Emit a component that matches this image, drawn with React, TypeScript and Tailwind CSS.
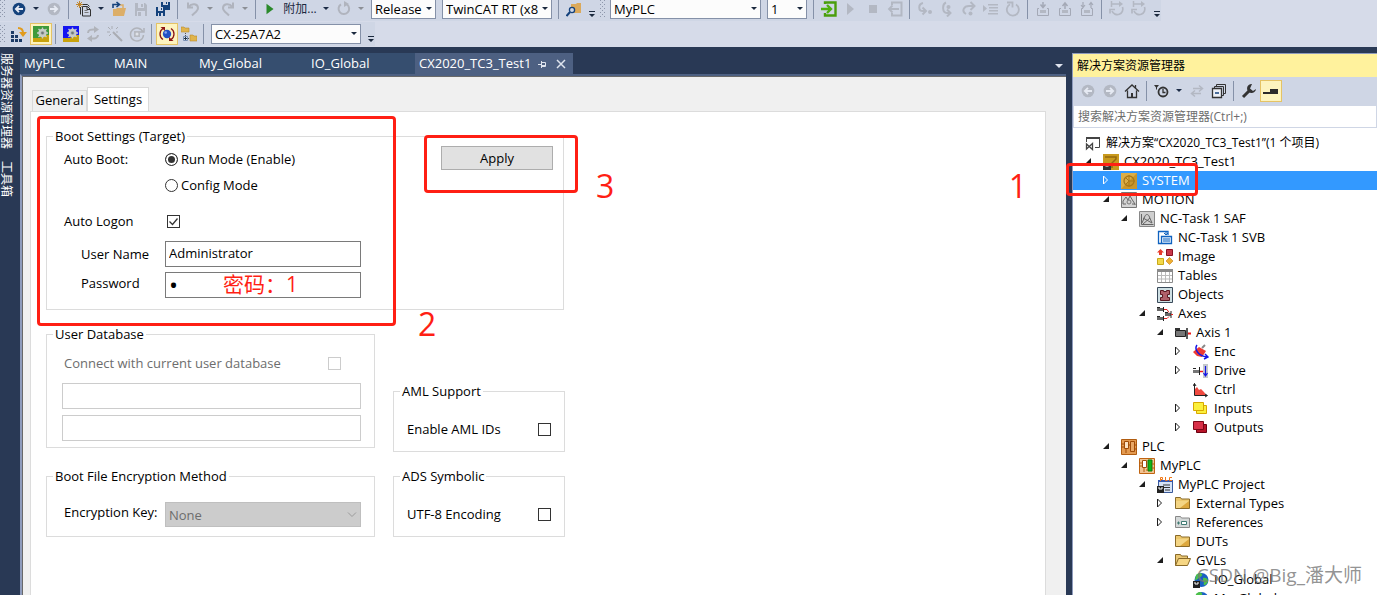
import React, { useState } from 'react';

type IconProps = { children: React.ReactNode; size?: string };

const Svg: React.FC<IconProps> = ({ children, size = 'w-4' }) => (
  <svg viewBox="0 0 16 16" className={`${size} h-4 shrink-0`} fill="none" aria-hidden="true">{children}</svg>
);

const NAVY = '#1b3a66';
const DIM = '#b3b8c3';

/* Toolbar helpers */

const Tool: React.FC<{ label: string; active?: boolean; disabled?: boolean; children: React.ReactNode }> = ({ label, active, disabled, children }) => (
  <button
    aria-label={label}
    disabled={disabled}
    className={active
      ? '-mx-[3px] flex h-[22px] w-[22px] shrink-0 items-center justify-center border border-[#e5c365] bg-[#fdf4bf]'
      : 'flex h-4 shrink-0 items-center justify-center'}
  >
    {children}
  </button>
);

const Sep = () => <span className="mr-px h-5 w-px shrink-0 bg-[#8591a8]" />;

const Caret: React.FC<{ dim?: boolean }> = ({ dim }) => (
  <svg viewBox="0 0 9 6" className="-mx-px h-1.5 w-[9px] shrink-0" aria-hidden="true">
    <path d="M1 1h6L4 4z" fill={dim ? '#8c8f96' : '#1b2a45'} />
  </svg>
);

const Overflow = () => (
  <svg viewBox="0 0 8 16" className="h-4 w-2 shrink-0" aria-hidden="true">
    <path d="M1 10h6v1H1zM1 13h6l-3 3z" fill="#1b293e" />
  </svg>
);

const Grip: React.FC<{ tight?: boolean }> = ({ tight }) => (
  <svg viewBox="0 0 6 18" className={tight ? '-mx-[2px] h-[18px] w-1.5 shrink-0' : '-mr-px h-[18px] w-1.5 shrink-0'} aria-hidden="true">
    {[0, 4, 8, 12, 16].map(y => (
      <g key={y} fill="#8e97ab">
        <path d={`M0 ${y}h1v1h-1zM4 ${y}h1v1h-1zM2 ${y + 2}h1v1h-1z`} />
      </g>
    ))}
  </svg>
);

const Combo: React.FC<{ label: string; value: string; width: string }> = ({ label, value, width }) => (
  <div className={`relative h-5 shrink-0 ${width}`}>
    <select aria-label={label} className="block h-5 w-full appearance-none overflow-hidden border border-[#8591a8] bg-[#fcfcfc] pr-3 pl-[3px] text-[13px] leading-4 text-clip whitespace-nowrap text-black outline-none">
      <option>{value}</option>
    </select>
    <svg viewBox="0 0 6 3" className="pointer-events-none absolute top-2 right-1 h-[3px] w-1.5" aria-hidden="true">
      <path d="M0 0h6L3 3z" fill="#1b293e" />
    </svg>
  </div>
);

/* Toolbar icons */

const CircleArrow: React.FC<{ dir: 'left' | 'right'; dim?: boolean }> = ({ dir, dim }) => (
  <Svg>
    <circle cx="8" cy="8" r="6.3" fill={dim ? DIM : '#14427c'} />
    <path
      d={dir === 'left' ? 'M12 8H5M8 4.8L4.8 8L8 11.2' : 'M4 8h7M8 4.8L11.2 8L8 11.2'}
      stroke="#e6eaf3"
      strokeWidth="1.8"
    />
  </Svg>
);

const NewProject = () => (
  <Svg>
    <path d="M5.5 3.5h6l2 2M4.500 6v7.500M6.500 5.500h5l3 3v6.500h-8zM11 5.500v3h3" stroke="#333" />
    <path d="M8.500 9.500h3M8.500 11.500h4" stroke="#777" />
    <path d="M1 1l5 5M6 1L1 6M3.500 0v7M0 3.500h7" stroke="#c07f1c" strokeWidth=".9" />
  </Svg>
);

const OpenFile = () => (
  <Svg>
    <path d="M2 8h3l1-1h9l-2 8H2z" fill="#dcae68" />
    <path d="M12 7V4H9" stroke="#dcae68" strokeWidth="1.500" />
    <path d="M2 7V3.500h6M5.500 1L8.500 3.500L5.500 6" stroke="#14427c" strokeWidth="1.600" />
  </Svg>
);

const Save = () => (
  <Svg>
    <path d="M2 2h10l2 2v11H2z" fill={DIM} />
    <path d="M5 2h6v5H5zM4 10h8v5H4z" fill="#d0d6e5" />
    <path d="M8 3h2v3H8zM5 11h3v4H5z" fill={DIM} />
  </Svg>
);

const SaveAll = () => (
  <Svg>
    <path d="M6 1h9v8H6zM1 6h9v9H1z" fill="#14427c" />
    <path d="M8 1h5v3H8zM3 6h5v4H3zM3 12h5v3H3z" fill="#cfd6e5" />
    <path d="M11 1h1v2h-1zM6 7h1v2H6zM4 12h2v3H4z" fill="#14427c" />
  </Svg>
);

const Undo: React.FC<{ flip?: boolean }> = ({ flip }) => (
  <Svg>
    <g transform={flip ? 'translate(16 0) scale(-1 1)' : undefined} stroke="#b0b4be" strokeWidth="2">
      <path d="M3 1.500v5h5M3.500 6C7 1.500 13 3 13 7c0 3-3 4.500-6 7.500" />
    </g>
  </Svg>
);

const Restart = () => (
  <Svg>
    <path d="M11 3.500A5.300 5.300 0 1 1 5 3.300" stroke="#b0b4be" strokeWidth="2" />
    <path d="M8 0v6l5-3z" fill="#b0b4be" />
  </Svg>
);

const FindFolder = () => (
  <Svg>
    <path d="M5 3h5l1-1h4v10H5z" fill="#dba95b" />
    <circle cx="6" cy="9" r="2.600" fill="#cfd6e5" stroke="#14427c" strokeWidth="1.300" />
    <path d="M4 11l-3.500 4" stroke="#14427c" strokeWidth="2" />
  </Svg>
);

const Door: React.FC<{ out?: boolean }> = ({ out }) => out ? (
  <Svg>
    <path d="M5 4V1.500h9.500v13H5V12" stroke={DIM} strokeWidth="2" />
    <path d="M12 8H2M5.500 4.500L2 8l3.500 3.500" stroke={DIM} strokeWidth="1.800" />
  </Svg>
) : (
  <Svg>
    <path d="M4 3V1.500h10.500v13H4V12" stroke="#4a9e0c" strokeWidth="2.400" />
    <path d="M0 8h9M6 4l4 4l-4 4" stroke="#4fb010" strokeWidth="2.400" />
  </Svg>
);

const StepOver = () => (
  <Svg>
    <path d="M6 2C1 3 1 10 6 10h2M5.500 6.500L9 10l-3.500 3.500" stroke={DIM} strokeWidth="2" />
    <circle cx="13" cy="11" r="2" fill={DIM} />
  </Svg>
);

const StepInto = () => (
  <Svg>
    <path d="M7 1.500C3 3 3 12 8 12h2M8 8.500l3.500 3.500L8 15.500" stroke={DIM} strokeWidth="2" />
    <circle cx="9.500" cy="6" r="2" fill={DIM} />
  </Svg>
);

const StepOut = () => (
  <Svg>
    <path d="M5 13C0 10 3 5 8 5h5M9.500 1L13.500 5L9.500 9" stroke={DIM} strokeWidth="2" />
    <circle cx="9.500" cy="12.500" r="2" fill={DIM} />
  </Svg>
);

const ShowLine = () => (
  <Svg>
    <path d="M0 4l4 3.500L0 11zM5 3h10v1.500H5zM6 6h9v1.500H6zM6 9h9v1.500H6zM5 12h10v1.500H5z" fill={DIM} />
  </Svg>
);

const Cycle = () => (
  <Svg>
    <path d="M11 3.500A6 6 0 1 1 5 3.300" stroke={DIM} strokeWidth="1.800" />
    <path d="M2 1.500h5.500v5" stroke={DIM} strokeWidth="1.800" />
  </Svg>
);

const Tray: React.FC<{ kind: 'down' | 'up' | 'both' }> = ({ kind }) => (
  <Svg>
    <path d="M4 7.500H2.500v7h11v-7H12" stroke="#a4a9b6" />
    <path d="M5 9h6v3H5z" fill={DIM} />
    {kind === 'down' && <path d="M8 1v5M5.500 3.500L8 6.500l2.500-3" stroke="#a4a9b6" strokeWidth="1.500" />}
    {kind === 'up' && <path d="M8 8V2.500M5.500 5L8 2l2.500 3" stroke="#a4a9b6" strokeWidth="1.500" />}
    {kind === 'both' && <path d="M4 1v5M2 4l2 2.500L6 4M12 7V2M10 4l2-2.500L14 4" stroke="#a4a9b6" strokeWidth="1.200" />}
  </Svg>
);

const Loop = () => (
  <Svg>
    <path d="M2 3h9M2.500 0v6" stroke={DIM} strokeWidth="1.500" />
    <path d="M10 0v6l4-3z" fill={DIM} />
    <path d="M13.500 6a5.500 5.500 0 1 1-10.500 4M1 12.500v-4h5" stroke={DIM} strokeWidth="1.700" />
  </Svg>
);

const Activate = () => (
  <Svg>
    <path d="M0 5h3v3H0zM0 9h3v3H0zM0 13h3v3H0zM4 9h3v3H4zM4 13h3v3H4zM8 13h3v3H8z" fill={NAVY} />
    <path d="M7 2c4 0 5 2 5 5" stroke="#e19b1d" strokeWidth="2" />
    <path d="M8 6h8l-4 5z" fill="#e19b1d" />
  </Svg>
);

const GearTile: React.FC<{ color: string }> = ({ color }) => (
  <Svg>
    <path d="M0 0h16v16H0z" fill={color} />
    <path d="M0 12h7l3-3h6v7H0z" fill="#c9a30c" />
    <circle cx="9.500" cy="7" r="3.200" stroke="#c8ccc8" strokeWidth="2" />
    <path d="M9.500 1.500v11M4 7h11M5.500 3l8 8M13.500 3l-8 8" stroke="#c8ccc8" strokeWidth="1.300" />
    <circle cx="9.500" cy="7" r="1.400" fill="#707878" />
  </Svg>
);

const Swap = () => (
  <Svg>
    <path d="M3 7c0-3 3-4 8-3.500M13 9c0 3-3 4-8 3.500" stroke="#b0b3ba" strokeWidth="2" />
    <path d="M9 0l5 3.500L9 7zM7 9l-5 3.500L7 16z" fill="#b0b3ba" />
  </Svg>
);

const Wand = () => (
  <Svg>
    <path d="M6 6l9 9" stroke="#a9acb3" strokeWidth="2" />
    <path d="M5 0v3M1 1l2.500 2.500M0 6h3M2 10l2-2M9 3l2-2M9 6h2" stroke="#a9acb3" />
  </Svg>
);

const Target = () => (
  <Svg>
    <path d="M14 6A6.500 6.500 0 1 0 14.500 9M15 2v4h-4" stroke="#b0b3ba" strokeWidth="1.500" />
    <path d="M5 5h6v6H5z" fill="#b7bac1" />
    <circle cx="8" cy="8" r="1.500" fill="#dfe2e8" />
  </Svg>
);

const RunMode = () => (
  <Svg>
    <circle cx="8" cy="8" r="4.200" fill="#2450c4" />
    <circle cx="6.700" cy="6.500" r="1.300" fill="#89a6f0" />
    <path d="M4 2.500C0 5 0 11 4 13.500M12 2.500c4 2.500 4 8.500 0 11" stroke="#8c1414" strokeWidth="1.300" />
    <path d="M1.500 1H6v4zM14.500 15H10v-4z" fill="#8c1414" />
  </Svg>
);

const FolderLink = () => (
  <Svg>
    <path d="M0 1h3l1 1h4v4H0zM9 9h3l1 1h3v5H9z" fill="#e0b44c" stroke="#b88a2c" strokeWidth=".6" />
    <path d="M4.500 7v3M7 12.500h2" stroke="#555" strokeDasharray="1 1" />
    <path d="M2.500 10.500h4v4h-4z" fill="#dfe8f4" stroke="#7a90b5" />
    <path d="M3 12.500h3M4.500 11v3" stroke="#234" />
  </Svg>
);

/* Solution tree icons */

const TREE_ICONS: Record<string, React.ReactNode> = {
  solution: (
    <>
      <path d="M1.500 7V2.500h13v10H10" stroke="#444" />
      <path d="M1 2h14v2H1z" fill="#444" />
      <path d="M1.500 9v5l6-5.500v6z" stroke="#444" strokeWidth="1.300" />
    </>
  ),
  project: (
    <>
      <path d="M0 0h16v16H0z" fill="#c99a1e" />
      <path d="M2 3h11v2L9 9v5" stroke="#94690f" strokeWidth="1.500" />
      <path d="M0 9h8v7H0z" fill="#333" />
      <path d="M2.500 10v2h3v-2" stroke="#fff" />
    </>
  ),
  system: (
    <>
      <path d="M0 0h16v16H0z" fill="#c9962a" />
      <path d="M0 0h16L0 16z" fill="#dcae48" />
      <circle cx="8" cy="8" r="5" stroke="#a87818" strokeWidth="1.300" />
      <path d="M8 2v12M8 8L4 4M8 8h6M4 12l4-4" stroke="#a87818" />
    </>
  ),
  motion: (
    <>
      <path d="M.5 .5h15v15H.5z" fill="#d4d4d4" stroke="#777" />
      <path d="M2 12V9l3-4l2 3l2-4l3 5l2 3v1M2 12h3M11 12h3" stroke="#666" />
      <circle cx="8" cy="10" r="2" stroke="#777" />
    </>
  ),
  task: (
    <>
      <path d="M.5 .5h15v15H.5z" fill="#cfcfcf" stroke="#888" />
      <path d="M2.500 3v10.500h12M3 12l3-7c1-2 3-2 4 0l3 7M4 7l9 5M11 7l-7 6" stroke="#666" />
    </>
  ),
  svb: (
    <>
      <path d="M11 5V1.500H1.500v12H4" stroke="#0f62c0" strokeWidth="1.300" />
      <path d="M4.500 6.500h10v7h-10z" fill="#e5f1fd" stroke="#0f62c0" strokeWidth="1.300" />
      <path d="M6 9h7M6 11h7M9 1v3M7 3l2 2l2-2" stroke="#0f62c0" />
    </>
  ),
  image: (
    <>
      <path d="M3.500 0L7 3.500H5V6H2V3.500H0z" fill="#e83a2a" />
      <path d="M9.500 .5h6v6h-6z" fill="#c8384a" stroke="#8a1022" />
      <path d="M.5 9.500h6v6h-6z" fill="#f2d84a" stroke="#c8a818" />
      <path d="M12.500 8.500L16 12l-3.500 3.500L9 12z" fill="#f0b030" stroke="#c07810" strokeWidth=".6" />
    </>
  ),
  tables: (
    <>
      <path d="M.5 1.500h15v13H.5z" fill="#fff" stroke="#8a8a8a" />
      <path d="M0 1h16v3H0z" fill="#8a8a8a" />
      <path d="M4.500 4v10M8.500 4v10M12.500 4v10M1 7.500h14M1 11h14" stroke="#bbb" />
    </>
  ),
  objects: (
    <>
      <path d="M.5 .5h15v15H.5z" fill="#cfe0e4" stroke="#3a4a5a" />
      <path d="M3.500 3.500h3v1h3v-1h3v4h-2v3h2v3h-9v-3h2v-3h-2z" fill="#b0606a" stroke="#5a1820" />
    </>
  ),
  axes: (
    <>
      <path d="M0 2h6v3H0zM0 11h6v3H0zM8 7h6v3H8z" fill="#666" />
      <path d="M0 1.500h3M6.500 1v5M6.500 10v5M14 5v7M8 6.500h3M0 10.500h3" stroke="#222" />
      <path d="M7 3.500h3l2 3M7 12.500h3l2-2M14 8.500h2" stroke="#e02020" />
    </>
  ),
  axis: (
    <>
      <path d="M.5 5.500h10v6H.5z" fill="#777" stroke="#222" />
      <path d="M0 3h5v2H0z" fill="#333" />
      <path d="M12 3v11" stroke="#222" strokeWidth="1.500" />
      <path d="M13 8.500h3" stroke="#f01818" strokeWidth="2" />
    </>
  ),
  enc: (
    <>
      <path d="M6 3l7 4l-4 6l-5-1l-4-4z" fill="#ee3b33" />
      <path d="M9 4l3-3" stroke="#888" strokeWidth="2" />
      <path d="M4 1C1 5 5 12 14 13M12 10l3 3l-4 2" stroke="#1414e6" strokeWidth="1.500" />
    </>
  ),
  drive: (
    <>
      <path d="M0 7h6v3H0z" fill="#777" />
      <path d="M0 5.500h3M6.500 4v8" stroke="#222" />
      <path d="M7 8.500h3" stroke="#f01818" strokeWidth="1.500" />
      <path d="M10 1h5v14h-5z" fill="#c4c8cc" />
      <path d="M12.500 3v9M10.500 10l2 3l2-3" stroke="#1414e6" strokeWidth="1.200" />
    </>
  ),
  ctrl: (
    <>
      <path d="M2 13V7l2-2l2 3l2-1l3 3l2 3z" fill="#f04a40" />
      <path d="M1.500 1.500v12H14M0 4l1.500-2.500L3 4M12 12l2.500 1.500L12 15" stroke="#222" />
    </>
  ),
  inputs: (
    <>
      <path d="M3.500 4.500h10v8h-10z" fill="#fbf03c" stroke="#d8a800" />
      <path d="M.5 1.500h10v8H.5z" fill="#fbf03c" stroke="#d8a800" />
    </>
  ),
  outputs: (
    <>
      <path d="M3.500 4.500h10v8h-10z" fill="#b81428" stroke="#6a0010" />
      <path d="M.5 1.500h10v8H.5z" fill="#d83048" stroke="#7a0818" />
    </>
  ),
  plc: (
    <>
      <path d="M.5 .5h15v15H.5z" fill="#e39a50" stroke="#b05c10" />
      <path d="M3.500 2.500h4v7h-4z" fill="#fbe3c4" stroke="#a04c08" />
      <path d="M9.500 2.500h4v10h-4z" fill="#e8a868" stroke="#a04c08" />
      <path d="M0 5h3M0 8h3M5 10v4M13 6h3M13 10h3M7 6h3" stroke="#a04c08" />
    </>
  ),
  myplc: (
    <>
      <path d="M.5 .5h15v15H.5z" fill="#f3c392" stroke="#c06410" />
      <path d="M3.500 2.500h4v7h-4z" fill="#fff" stroke="#a04c08" />
      <path d="M9 2h4v11H9z" fill="#0fb414" stroke="#0a7a0c" />
      <path d="M0 5h3M0 8h3M5 10v4M13 6h3M13 10h3M7 12h2" stroke="#b05c10" />
    </>
  ),
  plcproject: (
    <>
      <path d="M1.500 3.500h14v12h-14z" fill="#d6e2f5" stroke="#3a5a9a" />
      <path d="M1 3h15v2H1z" fill="#3558b0" />
      <path d="M3.500 4V.5h2v2h-2M8.500 0v3.500h2M15 .5h-2.500v3H15" stroke="#f07818" />
      <path d="M6 8h7M6 10.500h7M8 13h5" stroke="#333" />
      <path d="M0 9h7v7H0z" fill="#222" />
      <path d="M2 10v2h3v-2" stroke="#fff" />
    </>
  ),
  folder: (
    <>
      <path d="M.5 12.500v-11h5l1 1.500h8v9.500z" fill="#ecc86e" stroke="#8a6a28" />
      <path d="M1 5h13v7H1z" fill="#f4d584" />
      <path d="M14 5v7H5z" fill="#dda83e" />
    </>
  ),
  references: (
    <>
      <path d="M.5 12.500v-11h5l1 1.500h8v9.500z" fill="#d4d8d8" stroke="#888" />
      <path d="M6.500 6.500h5v3h-5z" fill="#fff" stroke="#3f7a72" />
      <path d="M2 8h3M3.500 6.500v3" stroke="#3f7a72" />
    </>
  ),
  folderopen: (
    <>
      <path d="M.5 12.500v-11h5l1 1.500h6V6" fill="#e9c774" stroke="#8a6a28" />
      <path d="M.5 12.500l3-7h12l-3 7z" fill="#f6d683" stroke="#8a6a28" />
    </>
  ),
  globe: (
    <>
      <circle cx="8.500" cy="8" r="7" fill="#1a5fc4" />
      <path d="M3 3c3-3 5-2 6-1s-1 3-3 4s-3 3-4 2zM10 6c3-1 5 1 5 3s-3 5-4 4s1-3-1-4z" fill="#4cc04a" />
      <path d="M0 9h7v7H0z" fill="#222" />
      <path d="M2 10v2h3v-2" stroke="#fff" />
    </>
  ),
};

type Node = { level: number; icon: string; text: string; state?: 'open' | 'closed' };

const NODES: Node[] = [
  { level: 0, icon: 'solution', text: '解决方案“CX2020_TC3_Test1”(1 个项目)' },
  { level: 1, icon: 'project', text: 'CX2020_TC3_Test1', state: 'open' },
  { level: 2, icon: 'system', text: 'SYSTEM', state: 'closed' },
  { level: 2, icon: 'motion', text: 'MOTION', state: 'open' },
  { level: 3, icon: 'task', text: 'NC-Task 1 SAF', state: 'open' },
  { level: 4, icon: 'svb', text: 'NC-Task 1 SVB' },
  { level: 4, icon: 'image', text: 'Image' },
  { level: 4, icon: 'tables', text: 'Tables' },
  { level: 4, icon: 'objects', text: 'Objects' },
  { level: 4, icon: 'axes', text: 'Axes', state: 'open' },
  { level: 5, icon: 'axis', text: 'Axis 1', state: 'open' },
  { level: 6, icon: 'enc', text: 'Enc', state: 'closed' },
  { level: 6, icon: 'drive', text: 'Drive', state: 'closed' },
  { level: 6, icon: 'ctrl', text: 'Ctrl' },
  { level: 6, icon: 'inputs', text: 'Inputs', state: 'closed' },
  { level: 6, icon: 'outputs', text: 'Outputs', state: 'closed' },
  { level: 2, icon: 'plc', text: 'PLC', state: 'open' },
  { level: 3, icon: 'myplc', text: 'MyPLC', state: 'open' },
  { level: 4, icon: 'plcproject', text: 'MyPLC Project', state: 'open' },
  { level: 5, icon: 'folder', text: 'External Types', state: 'closed' },
  { level: 5, icon: 'references', text: 'References', state: 'closed' },
  { level: 5, icon: 'folder', text: 'DUTs' },
  { level: 5, icon: 'folderopen', text: 'GVLs', state: 'open' },
  { level: 6, icon: 'globe', text: 'IO_Global' },
  { level: 6, icon: 'globe', text: 'My_Global' },
];

const TreeRow: React.FC<{ node: Node; selected: boolean; onSelect: () => void }> = ({ node, selected, onSelect }) => (
  <li
    role="treeitem"
    aria-selected={selected}
    onClick={onSelect}
    className={`flex h-[19px] items-center whitespace-nowrap ${selected ? 'bg-[#3399ff] text-white' : 'text-black'}`}
    style={{ paddingLeft: 12 + Math.max(node.level - 1, 0) * 18 }}
  >
    {node.level > 0 && (
      <svg viewBox="2 0 18 16" className="h-4 w-[18px] shrink-0" aria-hidden="true">
        {node.state === 'open' && <path d="M8 4v6H2z" fill="#1e1e1e" />}
        {node.state === 'closed' && <path d="M2.500 3v8l4-4z" fill="none" stroke={selected ? '#fff' : '#1e1e1e'} />}
      </svg>
    )}
    <Svg>{TREE_ICONS[node.icon]}</Svg>
    <span className={`ml-[5px] leading-[19px] ${node.level === 0 ? 'text-[12px]' : 'text-[13px]'}`}>{node.text}</span>
  </li>
);

/* Settings form */

const Group: React.FC<{ title: string; className: string; width?: string; children: React.ReactNode }> = ({ title, className, width = '', children }) => (
  <fieldset className={`border border-[#dcdcdc] ${width}`}>
    <legend className="ml-1.5 px-0.5 leading-[18px]">{title}</legend>
    <div className={className}>{children}</div>
  </fieldset>
);

const Check: React.FC<{ id: string; checked?: boolean; disabled?: boolean }> = ({ id, checked, disabled }) => (
  <span className="relative block h-[13px] w-[13px]">
    <input
      id={id}
      type="checkbox"
      defaultChecked={checked}
      disabled={disabled}
      className="peer block h-[13px] w-[13px] appearance-none border border-[#333] bg-white disabled:border-[#ccc]"
    />
    <svg viewBox="0 0 13 13" className="pointer-events-none absolute inset-0 hidden h-[13px] w-[13px] peer-checked:block" fill="none" aria-hidden="true">
      <path d="M2.500 6.500l3 3l5-6" stroke="#333" strokeWidth="1.300" />
    </svg>
  </span>
);

const radioClass = 'block h-[13px] w-[13px] appearance-none rounded-full border border-[#333] bg-white checked:bg-[#333] checked:shadow-[inset_0_0_0_2px_white]';
const fieldClass = 'block h-[26px] w-full border border-[#7a7a7a] bg-white px-[3px] pb-0.5 outline-none';

const SettingsForm = () => (
  <div className="flex flex-col items-start gap-[15px] pt-[15px] pl-[15px] leading-5">
    <Group title="Boot Settings (Target)" width="w-[518px]" className="flex items-start gap-20 pt-px pb-[11px] pl-[17px]">
      <div className="mt-[3px] grid grid-cols-[101px_196px] items-center">
        <span>Auto Boot:</span>
        <label className="flex items-center gap-[3px]">
          <input type="radio" name="boot" defaultChecked className={radioClass} />
          Run Mode (Enable)
        </label>
        <label className="col-start-2 mt-1.5 flex items-center gap-[3px]">
          <input type="radio" name="boot" className={radioClass} />
          Config Mode
        </label>
        <label htmlFor="logon" className="mt-4">Auto Logon</label>
        <div className="mt-4 pl-0.5"><Check id="logon" checked /></div>
        <label htmlFor="user" className="mt-2.5 pl-[17px]">User Name</label>
        <div className="mt-2.5"><input id="user" defaultValue="Administrator" className={`text-[13px] ${fieldClass}`} /></div>
        <label htmlFor="password" className="pl-[17px]">Password</label>
        <div className="relative mt-[5px]">
          <input id="password" type="password" defaultValue="1" className={`text-[24px] ${fieldClass}`} />
          <span className="absolute top-0 left-[58px] text-[21px] leading-6 text-[#ff1f14]">密码：1</span>
        </div>
      </div>
      <button className="h-6 w-28 border border-[#adadad] bg-[#e1e1e1]">Apply</button>
    </Group>

    <div className="flex items-start gap-[18px]">
      <div className="flex w-[329px] flex-col gap-[19px]">
        <Group title="User Database" className="pt-2.5 pr-[13px] pb-1.5 pl-[15px]">
          <div className="flex items-center justify-between pr-5 pl-0.5 text-[#6d6d6d]">
            <label htmlFor="userdb">Connect with current user database</label>
            <Check id="userdb" disabled />
          </div>
          <input aria-label="Database server" disabled className="mt-2.5 block h-[26px] w-full border border-[#ccc] bg-white" />
          <input aria-label="Database name" disabled className="mt-1.5 block h-[26px] w-full border border-[#ccc] bg-white" />
        </Group>
        <Group title="Boot File Encryption Method" className="pt-[17px] pr-[13px] pb-[9px] pl-[17px]">
          <div className="grid grid-cols-[101px_1fr] items-start">
            <label htmlFor="key">Encryption Key:</label>
            <div className="relative">
              <select id="key" disabled className="block h-[25px] w-full appearance-none border border-[#bfbfbf] bg-[#ccc] pl-[3px] text-[13px] text-[#6d6d6d] opacity-100">
                <option>None</option>
              </select>
              <svg viewBox="0 0 10 6" className="pointer-events-none absolute top-2.5 right-1 h-1.5 w-2.5" fill="none" aria-hidden="true">
                <path d="M1 .5l4 4l4-4" stroke="#9a9a9a" />
              </svg>
            </div>
          </div>
        </Group>
      </div>

      <div className="flex w-[172px] flex-col gap-[15px] pt-[57px]">
        <Group title="AML Support" className="flex items-center justify-between px-[13px] pt-[19px] pb-3">
          <label htmlFor="aml">Enable AML IDs</label>
          <Check id="aml" />
        </Group>
        <Group title="ADS Symbolic" className="flex items-center justify-between px-[13px] pt-[19px] pb-3">
          <label htmlFor="utf8">UTF-8 Encoding</label>
          <Check id="utf8" />
        </Group>
      </div>
    </div>
  </div>
);

const Toolbars = () => (
  <header className="shrink-0 overflow-hidden bg-[#d6dbe9]">
    <div className="flex h-[21px] items-center">
      <div className="-mt-1 flex h-6 items-center gap-1.5 bg-[#cfd6e5]">
        <Grip />
        <Tool label="Back"><CircleArrow dir="left" /></Tool>
        <Caret />
        <Tool label="Forward" disabled><CircleArrow dir="right" dim /></Tool>
        <Sep />
        <Tool label="New project"><NewProject /></Tool>
        <Caret />
        <Tool label="Open file"><OpenFile /></Tool>
        <Tool label="Save" disabled><Save /></Tool>
        <Tool label="Save all"><SaveAll /></Tool>
        <Sep />
        <Tool label="Undo" disabled><Undo /></Tool>
        <Caret dim />
        <Tool label="Redo" disabled><Undo flip /></Tool>
        <Caret dim />
        <Sep />
        <button className="flex h-5 shrink-0 items-center gap-1.5 text-[12px] text-[#1b293e]">
          <Svg size="w-3.5"><path d="M4 2l8 6l-8 6z" fill="#2a8a2a" /></Svg>
          <span className="w-[34px] whitespace-nowrap">附加...</span>
        </button>
        <Caret />
        <Tool label="Restart" disabled><Restart /></Tool>
        <Caret dim />
        <Combo label="Configuration" value="Release" width="w-[65px]" />
        <Combo label="Platform" value="TwinCAT RT (x8" width="w-[110px]" />
        <Sep />
        <Tool label="Find in files"><FindFolder /></Tool>
        <Overflow />
        <Grip tight />
        <Combo label="PLC project" value="MyPLC" width="w-[151px]" />
        <Combo label="Instance" value="1" width="w-10" />
        <Sep />
        <Tool label="Login"><Door /></Tool>
        <Tool label="Start" disabled><Svg><path d="M4 2l7 6l-7 6z" fill={DIM} /></Svg></Tool>
        <Tool label="Stop" disabled><Svg><path d="M4 4h8v8H4z" fill={DIM} /></Svg></Tool>
        <Tool label="Logout" disabled><Door out /></Tool>
        <Sep />
        <Tool label="Step over" disabled><StepOver /></Tool>
        <Tool label="Step into" disabled><StepInto /></Tool>
        <Tool label="Step out" disabled><StepOut /></Tool>
        <Tool label="Show statement" disabled><ShowLine /></Tool>
        <Tool label="Single cycle" disabled><Cycle /></Tool>
        <Sep />
        <Tool label="Download" disabled><Tray kind="down" /></Tool>
        <Tool label="Upload" disabled><Tray kind="up" /></Tool>
        <Tool label="Sync" disabled><Tray kind="both" /></Tool>
        <Sep />
        <Tool label="Reset cold" disabled><Loop /></Tool>
        <Tool label="Reset origin" disabled><Loop /></Tool>
        <Overflow />
      </div>
    </div>
    <div className="flex h-[26px] items-center">
      <div className="flex h-6 items-center gap-1.5 bg-[#cfd6e5]">
        <Grip />
        <Tool label="Activate configuration"><Activate /></Tool>
        <Tool label="Restart in run mode" active><GearTile color="#3f9a3a" /></Tool>
        <Sep />
        <Tool label="Restart in config mode"><GearTile color="#1414f0" /></Tool>
        <Tool label="Reload devices" disabled><Swap /></Tool>
        <Tool label="Scan" disabled><Wand /></Tool>
        <Tool label="Toggle free run" disabled><Target /></Tool>
        <Sep />
        <Tool label="Show online data" active><RunMode /></Tool>
        <Tool label="Show sub items"><FolderLink /></Tool>
        <Sep />
        <Combo label="Target system" value="CX-25A7A2" width="w-[150px]" />
        <Overflow />
      </div>
    </div>
  </header>
);

const SolutionExplorer = () => {
  const [selected, setSelected] = useState(2);

  return (
    <aside className="relative mt-[6px] flex w-[305px] shrink-0 flex-col border-t border-l border-[#8e9bbc] bg-white">
      <h2 className="h-[23px] shrink-0 bg-[#fff29d] pl-1 text-[12px] leading-[23px]">解决方案资源管理器</h2>
      <div className="flex h-7 shrink-0 items-center gap-1.5 bg-[#cfd6e5] pl-[7px]">
        <Tool label="Back" disabled><CircleArrow dir="left" dim /></Tool>
        <Tool label="Forward" disabled><CircleArrow dir="right" dim /></Tool>
        <Tool label="Home">
          <Svg>
            <path d="M1 8.500L8 2l7 6.500M3.500 7.500v7h9v-7M11.500 5V2" stroke="#333" strokeWidth="1.300" />
            <path d="M7 10h2v5H7z" fill="#333" />
          </Svg>
        </Tool>
        <Sep />
        <Tool label="Pending changes filter">
          <Svg>
            <circle cx="9" cy="9" r="4.500" stroke="#333" strokeWidth="1.800" />
            <path d="M9 6v3.500h2.500" stroke="#333" strokeWidth="1.300" />
            <path d="M0 2h5L3 4.500v2H2v-2z" fill="#333" />
          </Svg>
        </Tool>
        <Caret />
        <Tool label="Sync with active document" disabled>
          <Svg><path d="M4 5.500h9M10 2.500l3.500 3l-3.500 3M12 10.500H3M6 7.500l-3.500 3l3.500 3" stroke="#b3b8c3" strokeWidth="1.500" /></Svg>
        </Tool>
        <Tool label="Collapse all">
          <Svg>
            <path d="M5.500 3.500V1.500h9v9h-2M3.500 5.500V3.500h9v9h-2" stroke="#333" />
            <path d="M1.500 5.500h9v9h-9z" fill="#eef1f7" stroke="#333" strokeWidth="1.300" />
            <path d="M4 10h4" stroke="#14427c" strokeWidth="1.500" />
          </Svg>
        </Tool>
        <Sep />
        <Tool label="Properties">
          <Svg>
            <path d="M2 14l7-7" stroke="#333" strokeWidth="3" />
            <path d="M11 1a4.500 4.500 0 1 0 4 5l-3 2l-3-2.500z" fill="#333" />
          </Svg>
        </Tool>
        <Tool label="Preview selected items" active>
          <Svg><path d="M0 9h7V6h8v5H0z" fill="#2b2b2b" /></Svg>
        </Tool>
      </div>
      <input
        type="search"
        aria-label="搜索解决方案资源管理器"
        placeholder="搜索解决方案资源管理器(Ctrl+;)"
        className="h-[23px] w-full shrink-0 border border-[#cfd6e5] bg-white pl-1 text-[12px] outline-none placeholder:text-[#6d6d6d]"
      />
      <ul role="tree" className="pt-[5px]">
        {NODES.map((node, i) => (
          <TreeRow key={i} node={node} selected={i === selected} onSelect={() => setSelected(i)} />
        ))}
      </ul>
    </aside>
  );
};

const tabClass = 'h-full bg-[#364e6f] pt-px pl-1 text-left text-white';

export default function App() {
  return (
    <div className="relative flex h-screen flex-col overflow-hidden bg-[#293955] font-['Open_Sans','Noto_Sans_CJK_SC',sans-serif] text-[13px] text-black">
      <Toolbars />

      <div className="flex min-h-0 flex-1">
        <nav className="w-5 shrink-0 pt-1.5 text-[12px] leading-3 text-white">
          <div className="flex w-3 flex-col gap-3">
            <button className="[text-orientation:sideways] [writing-mode:vertical-rl]">服务器资源管理器</button>
            <button className="[text-orientation:sideways] [writing-mode:vertical-rl]">工具箱</button>
          </div>
        </nav>

        <main className="flex min-w-0 flex-1 flex-col pt-1.5">
          <div className="flex h-[21px] shrink-0 items-center">
            <button className={`w-[90px] ${tabClass}`}>MyPLC</button>
            <button className={`w-[85px] ${tabClass}`}>MAIN</button>
            <button className={`w-28 ${tabClass}`}>My_Global</button>
            <button className={`w-[108px] ${tabClass}`}>IO_Global</button>
            <div className="flex h-full w-[158px] items-center bg-[#4d6082] pt-px pl-1 text-white">
              <span className="flex-1">CX2020_TC3_Test1</span>
              <button aria-label="Pin tab">
                <svg viewBox="0 0 9 9" className="h-[9px] w-[9px]" fill="none" stroke="#dfe4ee" aria-hidden="true">
                  <path d="M0 4.500h3M3.500 1v7M3.500 2.500h4v4h-4M3.500 5.500h4" />
                </svg>
              </button>
              <button aria-label="Close tab" className="mr-[7px] ml-[9px]">
                <svg viewBox="0 0 10 10" className="h-2.5 w-2.5" stroke="#dfe4ee" strokeWidth="1.500" aria-hidden="true">
                  <path d="M1 1l8 8M9 1L1 9" />
                </svg>
              </button>
            </div>
            <button aria-label="Open documents" className="mr-[3px] ml-auto pt-1">
              <svg viewBox="0 0 8 4" className="h-1 w-2" aria-hidden="true"><path d="M0 0h8L4 4z" fill="#dfe4ee" /></svg>
            </button>
          </div>

          <div className="min-h-0 flex-1 border-t-2 border-l-2 border-[#8e9bbc] border-t-[#4d6082]">
            <div className="flex h-full flex-col border-t border-l border-[#696969] bg-[#f0f0f0] pt-2.5 pr-5 pl-[7px]">
              <div className="flex shrink-0 items-end pl-0.5">
                <button className="h-[21px] w-[55px] border border-b-0 border-[#d9d9d9] bg-[#f0f0f0]">General</button>
                <button className="-mb-px h-[25px] w-[62px] border border-b-0 border-[#d9d9d9] bg-white">Settings</button>
              </div>
              <div className="min-h-0 flex-1 border border-b-0 border-[#dcdcdc] bg-white">
                <SettingsForm />
              </div>
            </div>
          </div>
        </main>

        <div className="w-1.5 shrink-0" />
        <SolutionExplorer />
      </div>

      {/* Step markers drawn over the window */}
      <div className="pointer-events-none absolute inset-0 text-[32px] leading-8 text-[#ff1f14]">
        <div className="absolute top-[116px] left-[37px] h-[210px] w-[359px] rounded-sm border-3" />
        <div className="absolute top-[135px] left-[424px] h-[58px] w-[154px] rounded-sm border-3" />
        <div className="absolute top-[163px] right-[179px] h-[33px] w-[132px] rounded-sm border-3" />
        <span className="absolute top-[308px] left-[418px]">2</span>
        <span className="absolute top-[170px] left-[596px]">3</span>
        <span className="absolute top-[170px] right-[350px]">1</span>
      </div>
      <div className="pointer-events-none absolute right-[15px] bottom-1.5 text-[19px] leading-7 whitespace-nowrap text-[#777]/80">CSDN @Big_潘大师</div>
    </div>
  );
}
